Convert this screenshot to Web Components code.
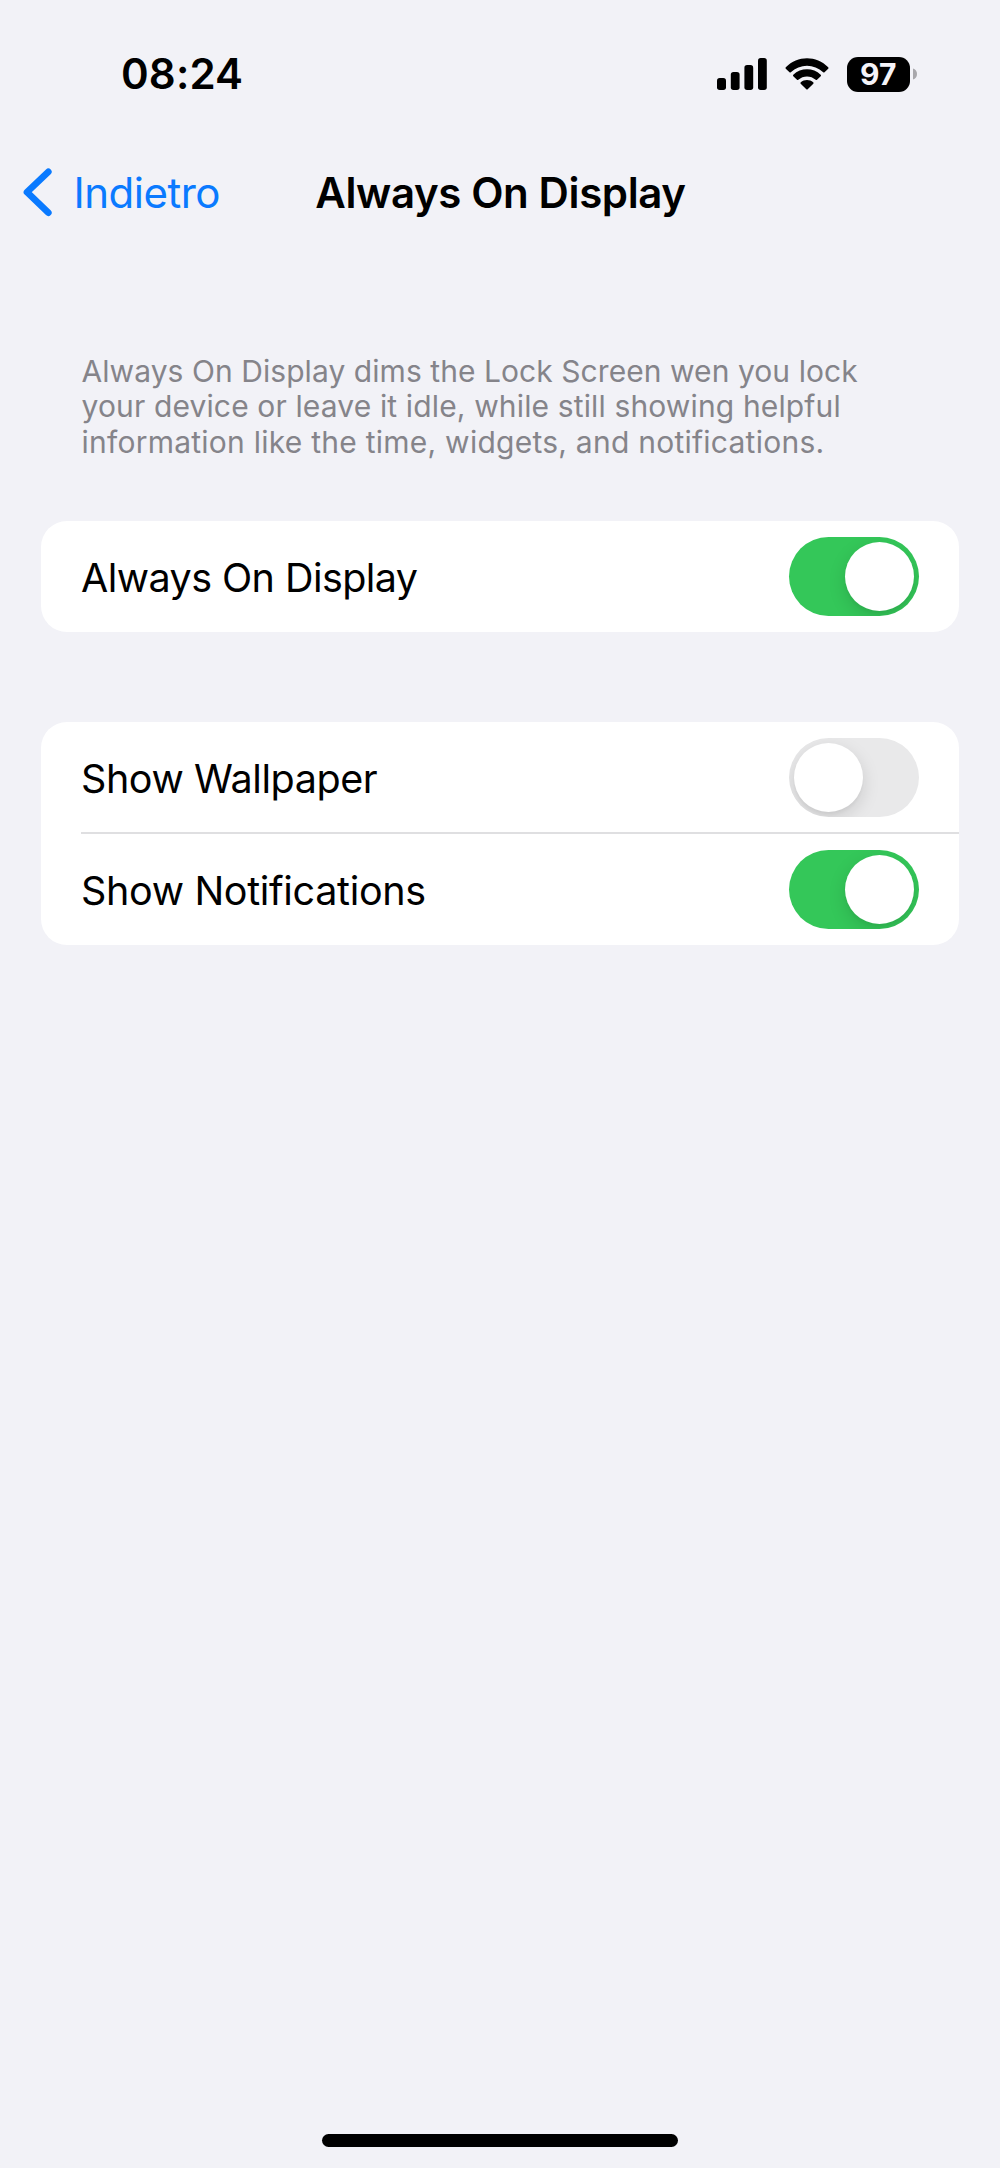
<!DOCTYPE html>
<html lang="it">
<head>
<meta charset="utf-8">
<title>Always On Display</title>
<style>
html, body { margin: 0; background: #f2f2f7; }
body { font-family: Inter, "Liberation Sans", sans-serif; color: #000; }
</style>
</head>
<body>
<settings-screen>
  <status-bar slot="top" time="08:24" battery="97"></status-bar>
  <nav-bar slot="top" back="Indietro">Always On Display</nav-bar>
  <settings-note>
    <div style="letter-spacing:.06px">Always On Display dims the Lock Screen wen you lock</div>
    <div style="letter-spacing:.137px">your device or leave it idle, while still showing helpful</div>
    <div style="letter-spacing:.246px">information like the time, widgets, and notifications.</div>
  </settings-note>
  <settings-group>
    <settings-row on style="--track:-.56px">Always On Display</settings-row>
  </settings-group>
  <settings-group>
    <settings-row divided style="--track:-.42px">Show Wallpaper</settings-row>
    <settings-row on style="--track:-.33px">Show Notifications</settings-row>
  </settings-group>
</settings-screen>
<script>
function define(name, render) {
  customElements.define(name, class extends HTMLElement {
    connectedCallback() {
      if (!this.shadowRoot) this.attachShadow({ mode: 'open' }).innerHTML = render(this);
    }
  });
}

define('settings-screen', () => `
<style>
:host { display: flex; flex-direction: column; box-sizing: border-box; height: 2168px; overflow: hidden; background: #f2f2f7; }
main { flex: 1; padding: 116.5px 41px 0 40.7px; }
footer { display: flex; justify-content: center; padding-bottom: 20.7px; }
.home { width: 356.5px; height: 13px; border-radius: 7px; background: #000; }
</style>
<slot name="top"></slot>
<main><slot></slot></main>
<footer><div class="home"></div></footer>`);

define('status-bar', el => `
<style>
:host { display: flex; align-items: center; justify-content: space-between; box-sizing: border-box; height: 148.5px; padding: 0 83px 0 121px; flex: none; }
.time { font-size: 42px; font-weight: 600; line-height: 50px; letter-spacing: .15px; }
.icons { display: flex; align-items: center; }
svg { display: block; }
.signal { margin-right: 18px; }
.wifi { margin-right: 18px; }
.battery { display: flex; align-items: center; gap: 3px; }
.body { width: 63.5px; height: 35px; border-radius: 11px; background: #000; color: #f4f3f8; font-size: 30px; font-weight: 700; line-height: 35.5px; text-align: center; }
</style>
<span class="time">${el.getAttribute('time')}</span>
<div class="icons">
  <svg class="signal" width="50" height="32" viewBox="0 0 50 32">
    <rect x="0" y="20" width="9" height="12" rx="2.7"/>
    <rect x="13.8" y="14" width="8.8" height="18" rx="2.7"/>
    <rect x="27.4" y="7" width="8.8" height="25" rx="2.7"/>
    <rect x="41" y="0" width="8.8" height="32" rx="2.7"/>
  </svg>
  <svg class="wifi" width="44" height="32" viewBox="0 0 44 32">
    <path d="M.8 9.2C12.5-2.8 31.5-2.8 43.2 9.2Q43.9 10 43.2 10.7L39.5 14.3Q38.9 14.9 38.2 14.3C29.2 5.5 14.8 5.5 5.8 14.3Q5.1 14.9 4.5 14.3L.8 10.7Q.1 10 .8 9.2Z"/>
    <path d="M8.3 16.7C15.8 9.4 28.2 9.4 35.7 16.7Q36.4 17.5 35.7 18.2L32 21.8Q31.4 22.4 30.7 21.8C25.8 17.3 18.2 17.3 13.3 21.8Q12.6 22.4 12 21.8L8.3 18.2Q7.6 17.5 8.3 16.7Z"/>
    <path d="M15.8 24.2C19.2 21.3 24.8 21.3 28.2 24.2Q29 25 28.3 25.7L22.7 31.3Q22 31.9 21.3 31.3L15.7 25.7Q15 25 15.8 24.2Z"/>
  </svg>
  <div class="battery">
    <div class="body">${el.getAttribute('battery')}</div>
    <svg width="4" height="12" viewBox="0 0 4 12"><path d="M0 .5C2.5 1.2 4 3.3 4 6S2.5 10.8 0 11.5Z" fill="#a9a8ac"/></svg>
  </div>
</div>`);

define('nav-bar', el => `
<style>
:host { display: grid; grid-template-columns: 1fr auto 1fr; align-items: center; height: 88.5px; padding: 0 21px 0 22px; flex: none; font-size: 42px; line-height: 50px; }
.back { display: flex; align-items: center; gap: 21.5px; color: #0a7aff; letter-spacing: -.5px; }
.title { font-weight: 600; letter-spacing: -.38px; }
</style>
<div class="back">
  <svg width="30" height="50" viewBox="0 0 30 50" fill="none" stroke="#0a7aff" stroke-width="6.7" stroke-linecap="round" stroke-linejoin="round"><path d="M26.3 3.8L5 24.2L26.3 44.7"/></svg>
  <span>${el.getAttribute('back')}</span>
</div>
<div class="title"><slot></slot></div>
<div></div>`);

define('settings-note', () => `
<style>
:host { display: block; margin: 0 0 60px 40.8px; font-size: 30px; line-height: 35.7px; color: #85848a; white-space: nowrap; }
</style>
<slot></slot>`);

define('settings-group', () => `
<style>
:host { display: block; margin-bottom: 89.7px; border-radius: 26px; background: #fff; overflow: hidden; }
</style>
<slot></slot>`);

define('settings-row', el => `
<style>
:host { display: block; padding-left: 40.3px; }
.row { display: flex; align-items: center; justify-content: space-between; box-sizing: border-box; height: 111.7px; padding-right: 40px; }
:host([divided]) .row { border-bottom: 2px solid #dfdfe1; padding-top: 1px; }
.label { font-size: 39.5px; line-height: 48px; letter-spacing: var(--track); padding-top: 3px; white-space: nowrap; }
</style>
<div class="row">
  <span class="label"><slot></slot></span>
  <toggle-switch ${el.hasAttribute('on') ? 'on' : ''}></toggle-switch>
</div>`);

define('toggle-switch', () => `
<style>
:host { display: flex; box-sizing: border-box; width: 130px; height: 79px; padding: 5px; border-radius: 40px; background: #e9e9ea; overflow: hidden; flex: none; }
:host([on]) { justify-content: flex-end; background: #34c759; }
.thumb { width: 69px; height: 69px; border-radius: 50%; background: #fff; box-shadow: 0 6px 18px rgba(0,0,0,.13), 0 3px 3px rgba(0,0,0,.03); }
</style>
<div class="thumb"></div>`);
</script>
</body>
</html>
